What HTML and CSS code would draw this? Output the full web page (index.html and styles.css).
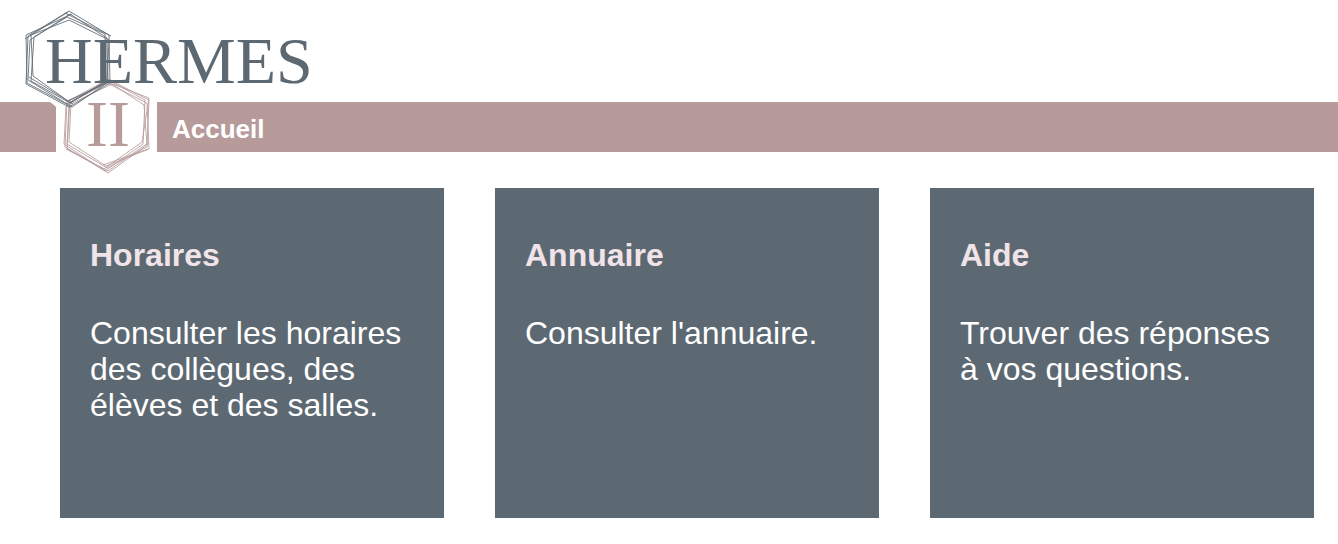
FILE: index.html
```html
<!DOCTYPE html>
<html lang="fr">
<head>
  <meta charset="utf-8">
  <meta name="viewport" content="width=device-width, initial-scale=1">
  <title>Hermes II</title>
  <link rel="stylesheet" href="styles.css">
</head>
<body>
  <header class="site-header">
    <a class="logo" href="#" aria-label="Hermes II">
      <svg class="logo-art" viewBox="0 0 320 180" width="320" height="180">
        <path class="logo-mask" d="M48 101C52 103 54 105 56 107V153H157V101Z"/>
        <g class="logo-rose">
          <path d="M108 79L149 100L147 147L107 168L67 144L69 104Z"/>
          <path d="M110 81L145 100L143 144L105 171L65 147L67 101Z"/>
          <path d="M107 83L147 103L149 149L106 166L69 142L71 102Z"/>
          <path d="M112 84L144 105L147 145L108 173L64 144L66 106Z"/>
          <path d="M105 81L149 98L142 142L104 169L67 149L70 100Z"/>
          <path d="M66 149L108 171L148 143M103 165L148 149"/>
        </g>
        <g class="logo-slate">
          <path d="M69 11L109 35L110 83L69 107L26 84L28 36Z"/>
          <path d="M70 14L107 38L108 80L67 104L28 80L30 40Z"/>
          <path d="M67 17L105 34L106 82L70 103L31 81L34 37Z"/>
          <path d="M69 20L109 40L107 83L68 101L33 76L31 35Z"/>
          <path d="M72 14L26 35L27 83L72 107L111 80"/>
          <path d="M65 13L111 36M25 39L68 12M29 77L73 104"/>
        </g>
        <text class="logo-text logo-name" x="45" y="83">HERMES</text>
        <text class="logo-text logo-version" x="86" y="146">II</text>
      </svg>
    </a>
    <nav class="main-nav">
      <a class="nav-link" href="#">Accueil</a>
    </nav>
  </header>
  <main class="cards">
    <a class="card" href="#">
      <h2 class="card-title">Horaires</h2>
      <p class="card-text">Consulter les horaires des collègues, des élèves et des salles.</p>
    </a>
    <a class="card" href="#">
      <h2 class="card-title">Annuaire</h2>
      <p class="card-text">Consulter l'annuaire.</p>
    </a>
    <a class="card" href="#">
      <h2 class="card-title">Aide</h2>
      <p class="card-text">Trouver des réponses à vos questions.</p>
    </a>
  </main>
</body>
</html>
```
FILE: styles.css
```css
* {
  box-sizing: border-box;
}

body {
  margin: 0;
  background: #fff;
  color: #fff;
  font-family: "Liberation Sans", Arial, sans-serif;
}

.site-header {
  position: relative;
  padding-top: 102px;
}

/* The logo hangs over the navigation bar. */
.logo {
  position: absolute;
  top: 0;
  left: 0;
  pointer-events: none;
}

.logo-art {
  display: block;
}

.logo-mask {
  fill: #fff;
}

.logo-slate,
.logo-rose {
  fill: none;
  stroke-width: 1;
  stroke-opacity: 0.85;
}

.logo-slate {
  stroke: #5d6972;
}

.logo-rose {
  stroke: #b79b9b;
}

.logo-text {
  font-family: "Liberation Serif", "Times New Roman", serif;
  font-size: 66px;
}

.logo-name {
  fill: #5d6972;
}

.logo-version {
  fill: #b79b9b;
}

.main-nav {
  display: flex;
  align-items: center;
  min-height: 50px;
  padding: 4px 24px 0 172px;
  background: #b79b9b;
}

.nav-link {
  color: #fff;
  font-size: 26px;
  font-weight: bold;
  line-height: 36px;
  text-decoration: none;
}

.cards {
  display: grid;
  grid-template-columns: repeat(3, 1fr);
  gap: 51px;
  padding: 36px 24px 26px 60px;
}

.card {
  min-height: 330px;
  padding: 49px 30px;
  background: #5d6972;
  color: #fff;
  font-size: 32px;
  line-height: 36px;
  text-decoration: none;
}

.card-title {
  margin: 0 0 42px;
  color: #f1e4e8;
  font-size: 32px;
}

.card-text {
  margin: 0;
}
```
